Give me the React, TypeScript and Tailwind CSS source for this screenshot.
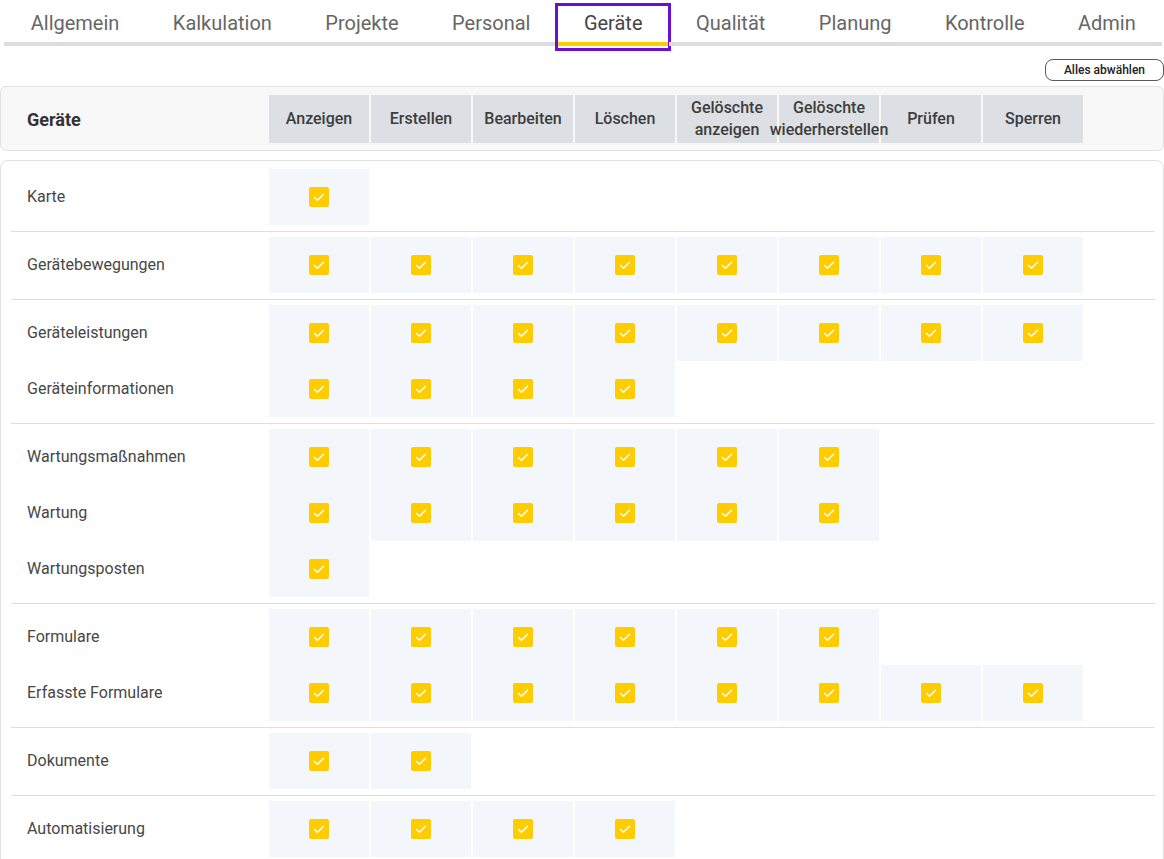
import React from "react";

const tabs = ["Allgemein", "Kalkulation", "Projekte", "Personal", "Geräte", "Qualität", "Planung", "Kontrolle", "Admin"];

const cols: string[][] = [
  ["Anzeigen"],
  ["Erstellen"],
  ["Bearbeiten"],
  ["Löschen"],
  ["Gelöschte", "anzeigen"],
  ["Gelöschte", "wiederherstellen"],
  ["Prüfen"],
  ["Sperren"],
];

const groups: { label: string; n: number }[][] = [
  [{ label: "Karte", n: 1 }],
  [{ label: "Gerätebewegungen", n: 8 }],
  [
    { label: "Geräteleistungen", n: 8 },
    { label: "Geräteinformationen", n: 4 },
  ],
  [
    { label: "Wartungsmaßnahmen", n: 6 },
    { label: "Wartung", n: 6 },
    { label: "Wartungsposten", n: 1 },
  ],
  [
    { label: "Formulare", n: 6 },
    { label: "Erfasste Formulare", n: 8 },
  ],
  [{ label: "Dokumente", n: 2 }],
  [{ label: "Automatisierung", n: 4 }],
];

function Check() {
  return (
    <span className="flex h-[20px] w-[20px] items-center justify-center rounded-[2px] bg-[#ffcc00]">
      <svg width="20" height="20" viewBox="0 0 20 20" fill="none">
        <path d="M5.5 10.5 L8.5 13.3 L14.5 7.2" stroke="#ffffff" strokeWidth="1.5" strokeLinecap="round" strokeLinejoin="round" />
      </svg>
    </span>
  );
}

export default function App() {
  return (
    <div className="min-h-screen w-[1164px] bg-white text-[#444] [font-family:Roboto,'Liberation_Sans',sans-serif]">
      {/* Tabs */}
      <div className="flex pl-[4px]">
        {tabs.map((t) => {
          const active = t === "Geräte";
          return (
            <div
              key={t}
              className={
                "relative flex h-[46px] items-center px-[26.72px] pt-[3px] text-[20px] border-b-4 " +
                (active ? "border-[#ffcc00] text-[#454545]" : "border-[#dcdde1] text-[#666666]")
              }
            >
              {t}
              {active && (
                <span className="pointer-events-none absolute -left-[2px] -right-[2px] top-[3px] -bottom-[9px] border-[3px] border-[#6b10d0]" />
              )}
            </div>
          );
        })}
      </div>

      {/* Button row */}
      <div className="mt-[13px] flex justify-end">
        <button className="h-[22px] rounded-[8px] border border-[#5a5a5a] bg-white px-[18px] text-[12px] font-medium leading-none text-[#222]">
          Alles abwählen
        </button>
      </div>

      {/* Header card */}
      <div className="mt-[5px] flex items-center rounded-[6px] border border-[#e2e2e5] bg-[#f8f8f8] pt-[8px] pb-[7px]">
        <div className="w-[268px] pl-[26px] text-[18px] font-bold text-[#333]">Geräte</div>
        <div className="flex gap-[2px]">
          {cols.map((c, i) => (
            <div
              key={i}
              className="flex h-[48px] w-[100px] items-center justify-center bg-[#dcdfe3] text-[16px] font-medium leading-[22px] text-[#3d3d3d]"
            >
              <span className="relative z-10 whitespace-nowrap text-center">
                {c.length === 1 ? (
                  c[0]
                ) : (
                  <>
                    {c[0]}
                    <br />
                    {c[1]}
                  </>
                )}
              </span>
            </div>
          ))}
        </div>
      </div>

      {/* Body card */}
      <div className="mt-[9px] rounded-t-[8px] border border-[#e2e2e5] bg-white pt-[8px] pb-[6px]">
        {groups.map((g, gi) => (
          <div
            key={gi}
            className={
              "ml-[10px] mr-[8px] " + (gi === 0 ? "pb-[6px] " : "pt-[5px] pb-[6px] ") + (gi < groups.length - 1 ? "border-b border-[#dedede]" : "")
            }
          >
            {g.map((r) => (
              <div key={r.label} className="flex h-[56px] items-center">
                <div className="w-[258px] pl-[16px] text-[16px] text-[#474747]">{r.label}</div>
                <div className="flex h-full gap-[2px]">
                  {Array.from({ length: r.n }).map((_, i) => (
                    <div key={i} className="flex h-full w-[100px] items-center justify-center bg-[#f3f6fa]">
                      <Check />
                    </div>
                  ))}
                </div>
              </div>
            ))}
          </div>
        ))}
      </div>
    </div>
  );
}
